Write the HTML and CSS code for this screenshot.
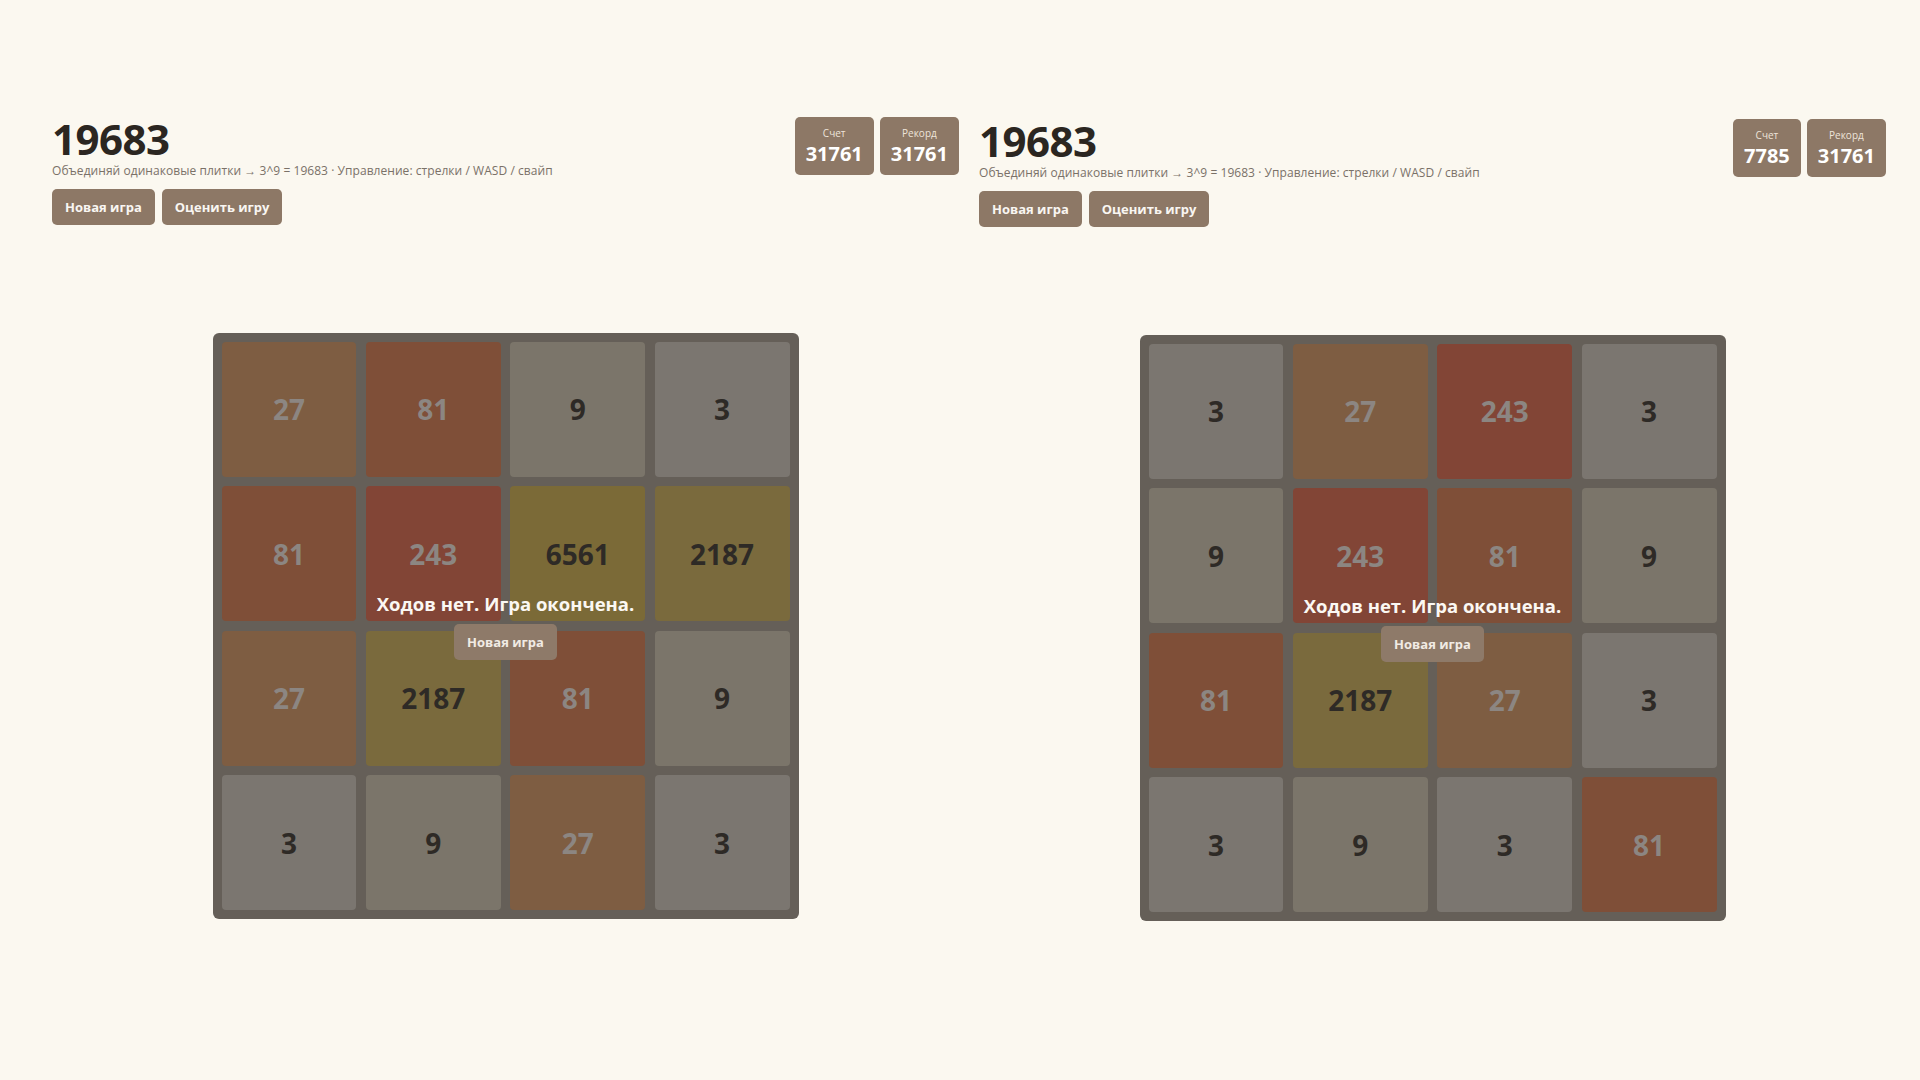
FILE: index.html
```html
<!DOCTYPE html>
<html lang="ru">
<head>
<meta charset="utf-8">
<title>19683</title>
<link rel="stylesheet" href="styles.css">
</head>
<body>
<div class="panes">
  <section class="pane pane-left">
    <header class="head">
      <div class="intro">
        <h1 class="title">19683</h1>
        <p class="sub">Объединяй одинаковые плитки → 3^9 = 19683 · Управление: стрелки / WASD / свайп</p>
        <div class="actions">
          <button class="btn">Новая игра</button>
          <button class="btn">Оценить игру</button>
        </div>
      </div>
      <div class="scores">
        <div class="score"><div class="score-label">Счет</div><div class="score-value">31761</div></div>
        <div class="score"><div class="score-label">Рекорд</div><div class="score-value">31761</div></div>
      </div>
    </header>
    <div class="board-wrap">
      <div class="board">
        <div class="tile t27">27</div>
        <div class="tile t81">81</div>
        <div class="tile t9">9</div>
        <div class="tile t3">3</div>
        <div class="tile t81">81</div>
        <div class="tile t243">243</div>
        <div class="tile t6561">6561</div>
        <div class="tile t2187">2187</div>
        <div class="tile t27">27</div>
        <div class="tile t2187">2187</div>
        <div class="tile t81">81</div>
        <div class="tile t9">9</div>
        <div class="tile t3">3</div>
        <div class="tile t9">9</div>
        <div class="tile t27">27</div>
        <div class="tile t3">3</div>
        <div class="overlay">
          <div class="over-text">Ходов нет. Игра окончена.</div>
          <button class="over-btn">Новая игра</button>
        </div>
      </div>
    </div>
  </section>
  <section class="pane pane-right">
    <header class="head">
      <div class="intro">
        <h1 class="title">19683</h1>
        <p class="sub">Объединяй одинаковые плитки → 3^9 = 19683 · Управление: стрелки / WASD / свайп</p>
        <div class="actions">
          <button class="btn">Новая игра</button>
          <button class="btn">Оценить игру</button>
        </div>
      </div>
      <div class="scores">
        <div class="score"><div class="score-label">Счет</div><div class="score-value">7785</div></div>
        <div class="score"><div class="score-label">Рекорд</div><div class="score-value">31761</div></div>
      </div>
    </header>
    <div class="board-wrap">
      <div class="board">
        <div class="tile t3">3</div>
        <div class="tile t27">27</div>
        <div class="tile t243">243</div>
        <div class="tile t3">3</div>
        <div class="tile t9">9</div>
        <div class="tile t243">243</div>
        <div class="tile t81">81</div>
        <div class="tile t9">9</div>
        <div class="tile t81">81</div>
        <div class="tile t2187">2187</div>
        <div class="tile t27">27</div>
        <div class="tile t3">3</div>
        <div class="tile t3">3</div>
        <div class="tile t9">9</div>
        <div class="tile t3">3</div>
        <div class="tile t81">81</div>
        <div class="overlay">
          <div class="over-text">Ходов нет. Игра окончена.</div>
          <button class="over-btn">Новая игра</button>
        </div>
      </div>
    </div>
  </section>
</div>
</body>
</html>
```

FILE: styles.css
```css
html, body {
  margin: 0;
  padding: 0;
}
body {
  background: #fbf8f0;
  font-family: "Open Sans", "Noto Sans", sans-serif;
  color: #2b2621;
  width: 1920px;
  height: 1080px;
  overflow: hidden;
}
.panes {
  display: flex;
  gap: 20px;
  padding-left: 52px;
}
.pane {
  width: 907px;
  flex: none;
}
.pane-left { padding-top: 116px; }
.pane-right { padding-top: 118px; }

.head {
  display: flex;
  justify-content: space-between;
  align-items: flex-start;
}
.title {
  margin: 0;
  font-size: 42px;
  line-height: 46px;
  font-weight: 700;
  letter-spacing: -0.5px;
  color: #2b2621;
}
.sub {
  margin: 0;
  font-size: 12px;
  line-height: 18px;
  letter-spacing: 0.05px;
  color: #7a7168;
}
.actions {
  display: flex;
  gap: 7px;
  margin-top: 9px;
}
.btn {
  height: 36px;
  padding: 0 13px;
  border: none;
  border-radius: 5px;
  background: #8d7866;
  color: #f9f6f2;
  font-family: inherit;
  font-size: 13px;
  font-weight: 700;
}
.scores {
  display: flex;
  gap: 6px;
  margin-top: 1px;
}
.score {
  background: #8d7866;
  border-radius: 5px;
  padding: 10px 11px 9px;
  text-align: center;
  color: #fff;
}
.score-label {
  font-size: 10px;
  line-height: 13px;
  color: #eee4da;
}
.score-value {
  margin-top: 2px;
  font-size: 20px;
  line-height: 24px;
  font-weight: 700;
}

.board-wrap {
  display: flex;
  justify-content: center;
  margin-top: 108px;
}
.board {
  position: relative;
  width: 586px;
  height: 586px;
  box-sizing: border-box;
  padding: 9px;
  background: #655f58;
  border-radius: 6px;
  display: grid;
  grid-template-columns: repeat(4, 1fr);
  grid-template-rows: repeat(4, 1fr);
  gap: 9.5px;
}
.tile {
  border-radius: 4px;
  display: flex;
  align-items: center;
  justify-content: center;
  font-size: 28px;
  font-weight: 700;
  color: #2e2a26;
}
.t3 { background: #7b7670; }
.t9 { background: #7b756a; }
.t27 { background: #7e5d42; color: #8c8682; }
.t81 { background: #7f4f38; color: #8c8682; }
.t243 { background: #824536; color: #8c8682; }
.t2187 { background: #7a6a3d; }
.t6561 { background: #7b6a37; }

.overlay {
  position: absolute;
  inset: 0;
  display: flex;
  flex-direction: column;
  align-items: center;
  justify-content: center;
  gap: 8px;
}
.over-text {
  font-size: 18.5px;
  line-height: 24px;
  font-weight: 700;
  color: #fbf8f3;
}
.over-btn {
  height: 36px;
  padding: 0 13px;
  border: none;
  border-radius: 5px;
  background: #8e7a69;
  color: #f1ebe4;
  font-family: inherit;
  font-size: 13px;
  font-weight: 700;
}
```
